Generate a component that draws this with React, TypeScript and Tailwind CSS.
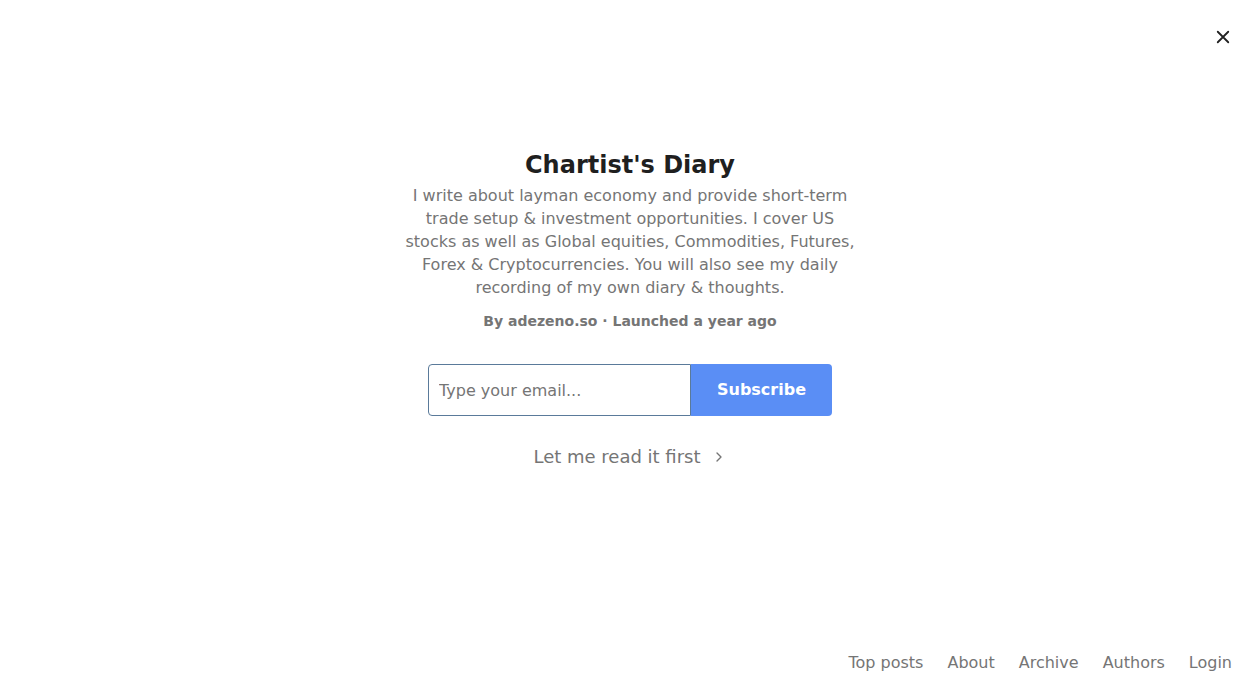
import React from 'react';

const links = ['Top posts', 'About', 'Archive', 'Authors', 'Login'];

export default function App() {
  return (
    <div className="relative flex h-[700px] w-full flex-col bg-white font-['DejaVu_Sans',sans-serif] text-[#1a1a1a]">
      <button className="absolute right-[28px] top-[28px] text-[#222]" aria-label="Close">
        <svg width="18" height="18" viewBox="0 0 24 24" fill="none" stroke="currentColor" strokeWidth="2.4" strokeLinecap="round">
          <path d="M5 5l14 14M19 5L5 19" />
        </svg>
      </button>

      <main className="flex flex-1 flex-col items-center pt-[148px]">
        <h1 className="text-[24px] font-bold leading-[35px] text-[#1f1f1f]">Chartist's Diary</h1>
        <p className="mt-[1px] w-[460px] text-center text-[16px] leading-[23px] text-[#757575]">
          I write about layman economy and provide short-term trade setup &amp; investment opportunities. I cover US stocks as well as Global equities, Commodities, Futures, Forex &amp; Cryptocurrencies. You will also see my daily recording of my own diary &amp; thoughts.
        </p>
        <div className="mt-[12px] text-[14px] font-bold leading-[20px] text-[#757575]">
          By adezeno.so · Launched a year ago
        </div>

        <form className="mt-[33px] flex h-[52px] w-[404px]" onSubmit={(e) => e.preventDefault()}>
          <input
            className="h-full flex-1 rounded-l-[4px] border border-[#5a7a9a] px-[10px] text-[16px] text-[#333] placeholder-[#757575] outline-none"
            placeholder="Type your email..."
          />
          <button className="h-full w-[141px] rounded-r-[4px] bg-[#5a8ef5] text-[16px] font-bold text-white">
            Subscribe
          </button>
        </form>

        <button className="mt-[27px] flex items-center gap-[10px] text-[18px] text-[#757575]">
          Let me read it first
          <svg width="16" height="16" viewBox="0 0 24 24" fill="none" stroke="currentColor" strokeWidth="2" strokeLinecap="round" strokeLinejoin="round">
            <path d="M9 6l6 6-6 6" />
          </svg>
        </button>
      </main>

      <footer className="flex justify-end gap-[24px] pb-[26px] pr-[28px] text-[16px] leading-[22px] text-[#757575]">
        {links.map((l) => (
          <a key={l} href="#">{l}</a>
        ))}
      </footer>
    </div>
  );
}
